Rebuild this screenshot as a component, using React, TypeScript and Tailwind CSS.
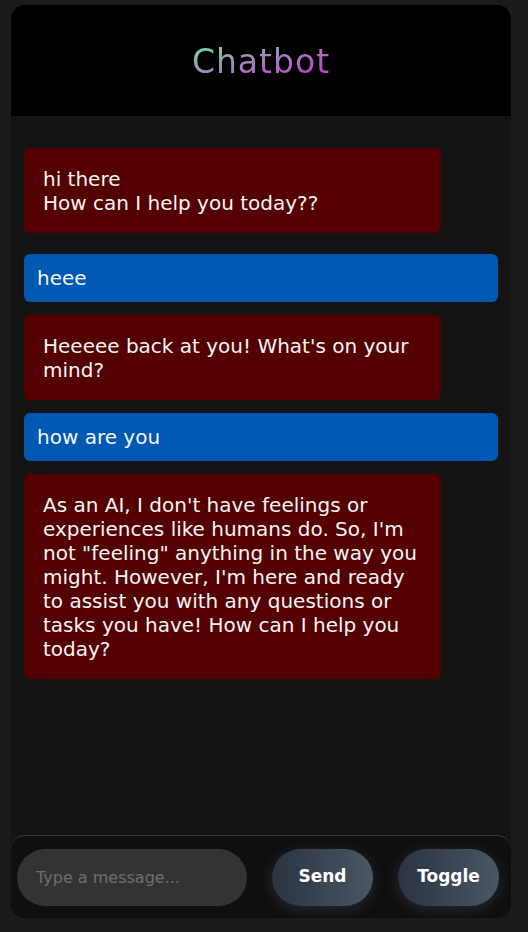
import { useState } from "react";

type Message = { from: "bot" | "user"; text: string };

const messages: Message[] = [
  { from: "bot", text: "hi there\nHow can I help you today??" },
  { from: "user", text: "heee" },
  { from: "bot", text: "Heeeee back at you! What's on your mind?" },
  { from: "user", text: "how are you" },
  {
    from: "bot",
    text: "As an AI, I don't have feelings or experiences like humans do. So, I'm not \"feeling\" anything in the way you might. However, I'm here and ready to assist you with any questions or tasks you have! How can I help you today?",
  },
];

const App = () => {
  const [input, setInput] = useState("");

  return (
    <div className="min-h-[932px] w-full bg-[#1b1b1b] pt-[5px] font-['DejaVu_Sans',sans-serif]">
      <div className="ml-[11px] flex h-[913px] w-[500px] flex-col overflow-hidden rounded-[14px] bg-[#141414]">
        <div className="flex h-[111px] shrink-0 items-center justify-center bg-black">
          <h1 className="mt-[2px] bg-[linear-gradient(165deg,#6fe0a2_5%,#a08cbc_42%,#be48cc_78%)] bg-clip-text text-[33px] leading-[40px] tracking-[1px] text-transparent">
            Chatbot
          </h1>
        </div>

        <div className="flex flex-1 flex-col gap-[13px] px-[13px] pt-8 text-[20px] leading-6 text-[#f5f5f5]">
          {messages.map((msg, i) =>
            msg.from === "bot" ? (
              <div
                key={i}
                className={`w-[417px] whitespace-pre-line rounded-[6px] bg-[#540000] pb-[18px] pl-[19px] pr-[17px] pt-[19px] ${
                  i === 0 ? "mb-2" : ""
                }`}
              >
                {msg.text}
              </div>
            ) : (
              <div key={i} className="w-full rounded-[6px] bg-[#0058b2] py-3 pl-[13px]">
                {msg.text}
              </div>
            )
          )}
        </div>

        <div className="flex h-[83px] shrink-0 items-center rounded-t-[14px] border-t border-[#3a3a3a] bg-[#0f0f0f] pl-[6px] pr-[12px]">
          <input
            value={input}
            onChange={(e) => setInput(e.target.value)}
            placeholder="Type a message..."
            className="h-[57px] w-[230px] rounded-full bg-[#333333] pl-[19px] text-[16px] text-white outline-none placeholder:text-[#6e6e6e]"
          />
          <button className="ml-[25px] h-[57px] w-[101px] rounded-full bg-gradient-to-r from-[#2b3440] to-[#4a5665] text-[17px] font-bold text-white shadow-[0_3px_14px_rgba(80,96,116,0.35)]">
            Send
          </button>
          <button className="ml-[25px] h-[57px] w-[101px] rounded-full bg-gradient-to-r from-[#2b3440] to-[#4a5665] text-[17px] font-bold text-white shadow-[0_3px_14px_rgba(80,96,116,0.35)]">
            Toggle
          </button>
        </div>
      </div>
    </div>
  );
};

export default App;
